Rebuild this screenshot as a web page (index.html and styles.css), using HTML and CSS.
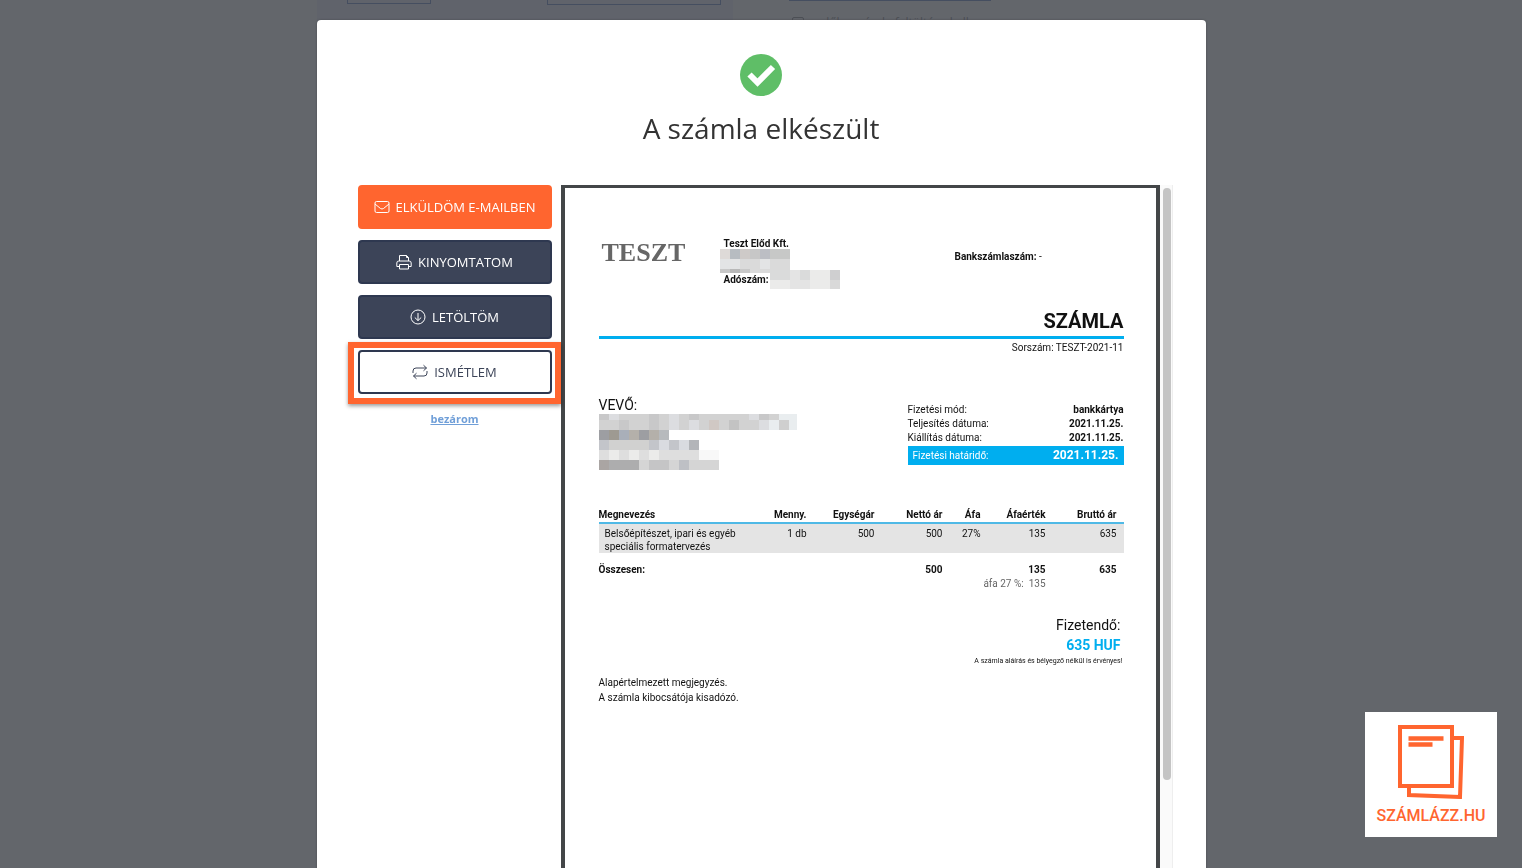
FILE: index.html
```
<!DOCTYPE html>
<html lang="hu">
<head>
<meta charset="utf-8">
<title>A számla elkészült</title>
<meta name="viewport" content="width=device-width, initial-scale=1">
<link rel="stylesheet" href="styles.css">
</head>
<body>
<div class="page">
	<div class="panel">
		<div class="field short"></div>
		<div class="field"></div>
	</div>
	<div class="options">
		<div class="underline"></div>
		<div class="option"><span class="box"></span>előlegszámla feltöltése kell</div>
	</div>
</div>

<div class="overlay">
<main class="modal">
	<svg class="done" viewBox="0 0 42 42"><circle cx="21" cy="21" r="21" fill="#5fbe67"/><path d="M9.500 20.500l8 8 15.500-15.500" fill="none" stroke="#fff" stroke-width="6"/></svg>
	<h1>A számla elkészült</h1>
	<div class="content">
		<div class="actions">
			<button type="button" class="btn primary">
				<svg class="icon" viewBox="0 0 16 16"><rect x="1" y="2.500" width="14" height="11" rx="1.500"/><path d="M1 5l5.500 4.500q1.500 1 3 0L15 5"/></svg>
				ELKÜLDÖM E-MAILBEN
			</button>
			<button type="button" class="btn">
				<svg class="icon" viewBox="0 0 16 16"><path d="M3.500 7V1.500h7l2 2V7M10.500 1.500v2h2M3.500 12.500h-2.700V9q0-2 2-2h10.400q2 0 2 2v3.500h-2.700M3.500 10.500h9v4.500h-9z"/></svg>
				KINYOMTATOM
			</button>
			<button type="button" class="btn">
				<svg class="icon" viewBox="0 0 16 16"><circle cx="8" cy="8" r="7"/><path d="M8 4v7.500M4.800 8.500L8 11.600l3.200-3.100"/></svg>
				LETÖLTÖM
			</button>
			<button type="button" class="btn outline">
				<svg class="icon" viewBox="0 0 16 16"><path d="M1 9V7q0-3 3-3h10.500M11.500 1.200L14.500 4l-3 2.800M15 7v2q0 3-3 3H1.500M4.500 9.200L1.500 12l3 2.800"/></svg>
				ISMÉTLEM
			</button>
			<a href="#" class="close">bezárom</a>
		</div>

		<div class="viewer">
			<article class="invoice">
				<header class="head">
					<div class="logo">TESZT</div>
					<div class="seller">
						<b>Teszt Előd Kft.</b>
						<svg class="mosaic name" viewBox="0 0 70 24" shape-rendering="crispEdges">
							<rect width="70" height="24" fill="#dadada"/>
							<path fill="#dedad8" d="M0 0h10v10H0z"/><path fill="#b7bcc1" d="M10 0h10v10H10z"/><path fill="#cecac8" d="M20 0h10v10H20z"/><path fill="#c7c7c7" d="M30 0h10v10H30z"/><path fill="#bcbec4" d="M40 0h10v10H40z"/><path fill="#c7c8c7" d="M50 0h20v10H50z"/>
							<path fill="#e3e4e5" d="M0 10h20v10H0zM40 10h10v10H40z"/>
							<path fill="#c8c8c8" d="M0 20h10v4H0zM20 20h10v4H20z"/><path fill="#b8b8b8" d="M10 20h10v4H10z"/>
						</svg>
						<div class="tax"><b>Adószám:</b>
						<svg class="mosaic number" viewBox="0 0 70 19" shape-rendering="crispEdges">
							<rect width="70" height="19" fill="#e4e4e4"/>
							<path fill="#dadbdb" d="M0 0h20v10H0zM30 0h10v10H30z"/><path fill="#cfcfd0" d="M60 0h10v10H60z"/><path fill="#ebebea" d="M0 10h20v9H0zM40 0h20v19H40z"/><path fill="#d9d9d9" d="M60 10h10v9H60z"/>
						</svg></div>
					</div>
					<div class="bank"><b>Bankszámlaszám:</b> -</div>
				</header>
				<h2>SZÁMLA</h2>
				<p class="serial">Sorszám: TESZT-2021-11</p>

				<section class="parties">
					<div class="buyer">
						<h3>VEVŐ:</h3>
						<svg class="mosaic address" viewBox="0 0 198 56" shape-rendering="crispEdges">
							<path fill="#d2d2d2" d="M0 0h180v16H0z"/><path fill="#d1d1d0" d="M0 16h70v10H0zM0 26h100v10H0z"/><path fill="#dedede" d="M0 36h100v10H0z"/><path fill="#d5d5d5" d="M0 46h120v10H0z"/>
							<path fill="#c8c8c9" d="M0 0h10v6H0zM50 0h10v16H50zM20 6h10v10H20zM90 0h10v6H90zM160 0h10v6h-10z"/>
							<path fill="#dcdde0" d="M10 0h10v6H10zM70 0h10v16H70zM90 6h10v10H90zM150 0h10v6h-10zM160 6h10v10h-10z"/>
							<path fill="#d0c8c4" d="M110 6h10v10h-10z"/><path fill="#c3c3c3" d="M130 6h10v10h-10z"/>
							<path fill="#e9edef" d="M170 6h10v10h-10zM190 6h8v10h-8zM180 0h18v6h-18z"/><path fill="#cfcfcf" d="M180 6h10v10h-10z"/>
							<path fill="#9d9ea2" d="M0 16h10v10H0zM40 16h10v10H40z"/><path fill="#9e9a92" d="M10 16h10v10H10z"/><path fill="#a9afb9" d="M20 16h10v10H20z"/><path fill="#b4b0aa" d="M30 16h10v10H30zM50 16h10v10H50z"/><path fill="#b7babd" d="M60 16h10v10H60z"/>
							<path fill="#c3c5ca" d="M0 26h10v10H0zM50 26h10v10H50zM70 26h10v10H70z"/><path fill="#d9dbe0" d="M60 26h10v10H60zM80 26h10v10H80z"/><path fill="#b3b5b9" d="M90 26h10v10H90z"/>
							<path fill="#ebebea" d="M10 36h10v10H10zM30 36h10v10H30zM50 36h10v10H50z"/><path fill="#f8f8f8" d="M100 36h20v10h-20z"/>
							<path fill="#aaa5a3" d="M0 46h10v10H0z"/><path fill="#adadae" d="M10 46h30v10H10z"/><path fill="#c5c5c6" d="M50 46h20v10H50z"/><path fill="#bec0c5" d="M80 46h10v10H80z"/>
						</svg>
					</div>
					<dl class="terms">
						<div><dt>Fizetési mód:</dt><dd>bankkártya</dd></div>
						<div><dt>Teljesítés dátuma:</dt><dd>2021.11.25.</dd></div>
						<div><dt>Kiállítás dátuma:</dt><dd>2021.11.25.</dd></div>
						<div class="due"><dt>Fizetési határidő:</dt><dd>2021.11.25.</dd></div>
					</dl>
				</section>

				<table>
					<colgroup><col><col class="qty"><col class="price"><col class="price"><col class="rate"><col class="vat"><col class="gross"></colgroup>
					<thead>
						<tr><th>Megnevezés</th><th>Menny.</th><th>Egységár</th><th>Nettó ár</th><th>Áfa</th><th>Áfaérték</th><th>Bruttó ár</th></tr>
					</thead>
					<tbody>
						<tr><td>Belsőépítészet, ipari és egyéb<br>speciális formatervezés</td><td>1 db</td><td>500</td><td>500</td><td>27%</td><td>135</td><td>635</td></tr>
					</tbody>
					<tfoot>
						<tr class="sum"><td>Összesen:</td><td></td><td></td><td>500</td><td></td><td>135</td><td>635</td></tr>
						<tr class="split"><td colspan="6">áfa 27 %: &nbsp;135</td><td></td></tr>
					</tfoot>
				</table>

				<div class="payable">
					<p>Fizetendő:</p>
					<p class="amount">635 HUF</p>
					<p class="valid">A számla aláírás és bélyegző nélkül is érvényes!</p>
				</div>
				<p class="note">Alapértelmezett megjegyzés.<br>A számla kibocsátója kisadózó.</p>
			</article>
			<div class="scrollbar"><div class="thumb"></div></div>
		</div>
	</div>
</main>
</div>

<div class="brand">
	<svg viewBox="0 0 66 74" fill="none" stroke="#ff652f"><path d="M2 2h52v59H2z" stroke-width="4"/><path d="M56 13h8l-2 59-51-2v-7" stroke-width="4"/><path d="M10.500 13.500h35M10.500 19.500h24" stroke-width="4.500"/></svg>
	<span>SZÁMLÁZZ.HU</span>
</div>
</body>
</html>
```

FILE: styles.css
```
*{
	box-sizing:border-box;
}
body{
	margin:0;
	background:#63666b;
	font-family:"Open Sans",sans-serif;
	overflow:hidden;
}
h1,h2,h3,p,dl,dd{
	margin:0;
}
/* dimmed form behind the dialog */
.page{
	display:flex;
	max-width:889px;
	height:24px;
	margin:0 auto;
}
.panel{
	display:flex;
	justify-content:space-between;
	align-items:flex-start;
	width:416px;
	padding:0 12px 0 30px;
	background:#60636b;
}
.field{
	width:174px;
	height:5px;
	border:1px solid #454e60;
	border-top:0;
}
.short{
	width:84px;
	height:4px;
}
.options{
	padding-left:56px;
	font-size:12px;
	line-height:16px;
	color:#4c4f55;
}
.underline{
	width:202px;
	height:1px;
	background:#454e60;
}
.option{
	display:flex;
	gap:16px;
	padding:14px 0 0 3px;
}
.box{
	width:12px;
	height:12px;
	margin-top:2px;
	border:1px solid #4c4f55;
	border-radius:2px;
}
.overlay{
	position:fixed;
	inset:0;
	padding-top:20px;
	overflow:hidden;
}
.modal{
	max-width:889px;
	min-height:100vh;
	margin:0 auto;
	padding:34px 33px 0 41px;
	background:#fff;
	border-radius:4px;
	box-shadow:0 0 2px #44474c;
}
.done{
	display:block;
	width:42px;
	height:42px;
	margin:0 auto;
	transform:translateX(-4px);
}
h1{
	margin:12px 8px 36px 0;
	font-size:28px;
	line-height:41px;
	font-weight:400;
	text-align:center;
	color:#333;
}
.content{
	display:grid;
	grid-template-columns:194px 1fr;
	gap:9px;
}
.actions{
	display:flex;
	flex-direction:column;
	gap:11px;
}
.btn{
	display:flex;
	align-items:center;
	justify-content:center;
	gap:6px;
	height:44px;
	padding:0;
	border:2px solid #2e3850;
	border-radius:4px;
	background:#3c4458;
	color:#fff;
	font:500 13px "Open Sans",sans-serif;
	cursor:pointer;
}
.primary{
	border-color:#ff652f;
	background:#ff652f;
}
.outline{
	position:relative;
	background:#fff;
	color:#3c4458;
	font-weight:400;
}
.outline::after{
	content:'';
	position:absolute;
	inset:-10px -11px -12px -12px;
	border:6px solid #ff652f;
	box-shadow:0 2px 4px rgba(0,0,0,.4);
}
.icon{
	width:16px;
	height:16px;
	fill:none;
	stroke:currentColor;
}
.close{
	align-self:center;
	margin-top:6px;
	font-size:11px;
	line-height:16px;
	font-weight:700;
	color:#709fd8;
}
.viewer{
	display:flex;
	height:100vh;
}
.invoice{
	flex:1;
	padding:49px 32px 0 34px;
	border:4px solid #434648;
	border-top-width:3px;
	border-bottom:0;
	font-family:Roboto,sans-serif;
	font-size:10px;
	line-height:14px;
	color:#111;
}
.scrollbar{
	width:13px;
	padding:3px;
	background:#fafafa;
	border-right:1px solid #eee;
}
.thumb{
	width:8px;
	height:592px;
	border-radius:4px;
	background:#c4c4c4;
}
.head{
	display:flex;
	height:71px;
}
.logo{
	width:121px;
	padding-left:3px;
	font:700 26px/32px "Liberation Serif",serif;
	color:#666;
}
.seller{
	width:235px;
}
.seller b{
	display:block;
	height:12px;
	padding-left:4px;
}
.mosaic{
	display:block;
}
.name{
	width:70px;
	height:24px;
}
.tax{
	display:flex;
	margin-top:-3px;
}
.tax b{
	width:50px;
	margin-top:3px;
	white-space:nowrap;
}
.number{
	width:70px;
	height:19px;
}
.bank{
	padding-top:13px;
}
h2{
	padding-bottom:2px;
	border-bottom:3px solid #00aeef;
	font-size:20px;
	line-height:26px;
	text-align:right;
}
.serial{
	margin-top:2px;
	text-align:right;
}
.parties{
	display:flex;
	justify-content:space-between;
	margin-top:41px;
}
h3{
	font-size:14px;
	line-height:18px;
	font-weight:400;
}
.address{
	width:198px;
	height:56px;
}
.terms{
	width:216px;
	padding-top:7px;
}
.terms div{
	display:flex;
	justify-content:space-between;
}
.terms dd{
	font-weight:700;
}
.terms .due{
	margin-top:1px;
	padding:0 5px;
	background:#00aeef;
	color:#fff;
	line-height:19px;
}
.due dd{
	font-size:12px;
}
table{
	width:100%;
	margin-top:38px;
	table-layout:fixed;
	border-collapse:collapse;
}
.qty{ width:57px; }
.price{ width:68px; }
.rate{ width:38px; }
.vat{ width:65px; }
.gross{ width:78px; }
th,td{
	padding:0;
	text-align:right;
	vertical-align:top;
	white-space:nowrap;
}
th:first-child,td:first-child{
	text-align:left;
}
th:last-child,td:last-child{
	padding-right:7px;
}
th{
	border-bottom:2px solid #4fb9e6;
}
tbody td{
	padding-top:3px;
	background:#e4e4e4;
	line-height:13px;
}
tbody td:first-child{
	padding-left:6px;
}
.sum td{
	padding-top:10px;
	font-weight:700;
}
.split td:first-child{
	text-align:right;
	color:#666;
}
.payable{
	margin-top:24px;
	padding-right:3px;
	font-size:14px;
	line-height:20px;
	text-align:right;
}
.amount{
	font-weight:700;
	color:#00aeef;
}
.valid{
	margin-right:-2px;
	font-size:7px;
	line-height:12px;
}
.note{
	margin-top:8px;
	line-height:15px;
}
.brand{
	position:fixed;
	right:25px;
	bottom:31px;
	display:flex;
	flex-direction:column;
	align-items:center;
	width:132px;
	height:125px;
	padding-top:13px;
	background:#fff;
	color:#ff652f;
	font:500 16px/34px Roboto,sans-serif;
}
.brand svg{
	width:66px;
	height:74px;
}
```
